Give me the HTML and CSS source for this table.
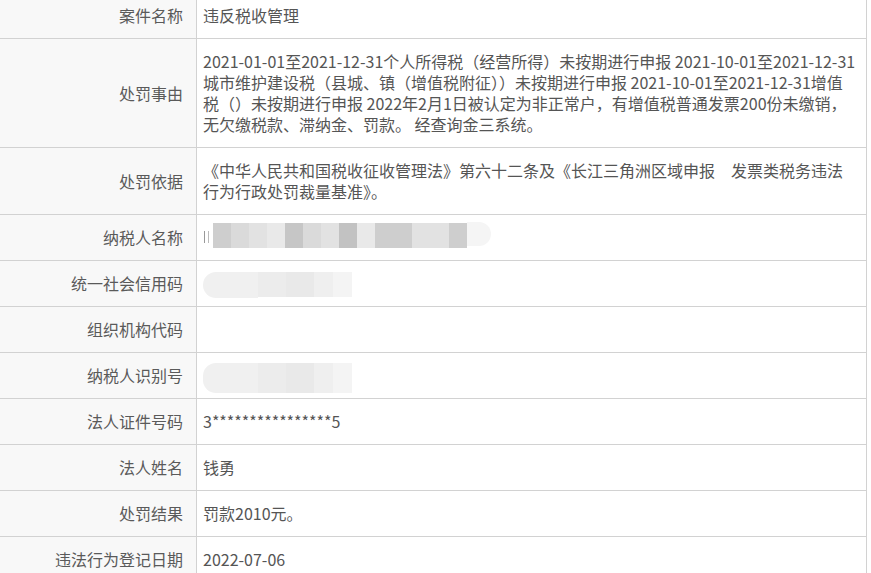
FILE: index.html
```html
<!DOCTYPE html>
<html lang="zh-CN">

<head>
    <meta charset="UTF-8">
    <title>行政处罚详情</title>
    <link rel="stylesheet" href="styles.css">
</head>

<body>

    <table class="detail">
        <tr>
            <td class="label">案件名称</td>
            <td class="value">违反税收管理</td>
        </tr>
        <tr>
            <td class="label">处罚事由</td>
            <td class="value">
                <span class="line">2021-01-01至2021-12-31个人所得税（经营所得）未按期进行申报 2021-10-01至2021-12-31</span>
                <span class="line">城市维护建设税（县城、镇（增值税附征））未按期进行申报 2021-10-01至2021-12-31增值</span>
                <span class="line">税（）未按期进行申报 2022年2月1日被认定为非正常户，有增值税普通发票200份未缴销，</span>
                <span class="line">无欠缴税款、滞纳金、罚款。 经查询金三系统。</span>
            </td>
        </tr>
        <tr>
            <td class="label">处罚依据</td>
            <td class="value">
                <span class="line">《中华人民共和国税收征收管理法》第六十二条及《长江三角洲区域申报　发票类税务违法</span>
                <span class="line">行为行政处罚裁量基准》。</span>
            </td>
        </tr>
        <tr>
            <td class="label">纳税人名称</td>
            <td class="value">
                <div class="mosaic">
                    <span class="stub"></span>
                    <span class="tile t2"></span>
                    <span class="tile t3"></span>
                    <span class="tile t4"></span>
                    <span class="tile t5"></span>
                    <span class="tile t1"></span>
                    <span class="tile t3"></span>
                    <span class="tile t4"></span>
                    <span class="tile t0"></span>
                    <span class="tile t5"></span>
                    <span class="tile wide t2"></span>
                    <span class="tile wide t4"></span>
                    <span class="tile t2"></span>
                    <span class="tail"></span>
                </div>
            </td>
        </tr>
        <tr>
            <td class="label">统一社会信用码</td>
            <td class="value">
                <div class="haze"><span class="cap"></span><span class="mist"></span></div>
            </td>
        </tr>
        <tr>
            <td class="label">组织机构代码</td>
            <td class="value"></td>
        </tr>
        <tr>
            <td class="label">纳税人识别号</td>
            <td class="value">
                <div class="haze low"><span class="cap"></span><span class="mist"></span></div>
            </td>
        </tr>
        <tr>
            <td class="label">法人证件号码</td>
            <td class="value">3****************5</td>
        </tr>
        <tr>
            <td class="label">法人姓名</td>
            <td class="value">钱勇</td>
        </tr>
        <tr>
            <td class="label">处罚结果</td>
            <td class="value">罚款2010元。</td>
        </tr>
        <tr>
            <td class="label">违法行为登记日期</td>
            <td class="value">2022-07-06</td>
        </tr>
    </table>

</body>

</html>
```

FILE: styles.css
```css
body {
    margin: 0;
    font-family: "Noto Sans CJK SC", "Liberation Sans", sans-serif;
    font-size: 16px;
    color: #5a5a5a;
    background: #fff;
}

.detail {
    width: 867px;
    margin-top: -8px;
    border-collapse: separate;
    border-spacing: 0;
    border-top: 1px solid #d2d2d2;
    table-layout: fixed;
}

.detail td {
    box-sizing: border-box;
    padding: 12px 4px 12px 6px;
    line-height: 21px;
    border-bottom: 1px solid #d2d2d2;
    border-right: 1px solid #d2d2d2;
    vertical-align: middle;
}

.detail .label {
    width: 197px;
    padding-right: 13px;
    text-align: right;
    background-color: #f8f8f8;
    white-space: nowrap;
}

.detail .value {
    width: 670px;
    color: #555;
}

.detail .line {
    display: block;
    white-space: nowrap;
}

/* masked name */
.mosaic {
    display: flex;
    height: 21px;
}

.mosaic .stub {
    width: 3px;
    height: 12px;
    margin: 4px 4px 0 1px;
    border-left: 1px solid #999;
    border-right: 1px solid #bbb;
}

.mosaic .tile {
    width: 18px;
    height: 25px;
    margin-top: -4px;
}

.mosaic .tile.wide {
    width: 37px;
}

.mosaic .t0 { background: #c2c2c2; }
.mosaic .t1 { background: #c6c6c6; }
.mosaic .t2 { background: #cecece; }
.mosaic .t3 { background: #dadada; }
.mosaic .t4 { background: #e2e2e2; }
.mosaic .t5 { background: #e9e9e9; }

.mosaic .tail {
    width: 24px;
    height: 24px;
    margin-top: -5px;
    background: #f5f5f5;
    border-radius: 0 12px 12px 0;
}

/* blurred codes */
.haze {
    display: flex;
    height: 21px;
}

.haze .cap {
    width: 55px;
    height: 26px;
    margin-top: -1px;
    background: #f0f0f0;
    border-radius: 13px 0 0 13px;
}

.haze .mist {
    width: 94px;
    height: 25px;
    margin-top: -1px;
    background: linear-gradient(90deg, #ececec 0 30%, #e9e9e9 30% 60%, #efefef 60% 80%, #f4f4f4 80%);
}

.haze.low .cap,
.haze.low .mist {
    margin-top: -2px;
    height: 30px;
}
```
